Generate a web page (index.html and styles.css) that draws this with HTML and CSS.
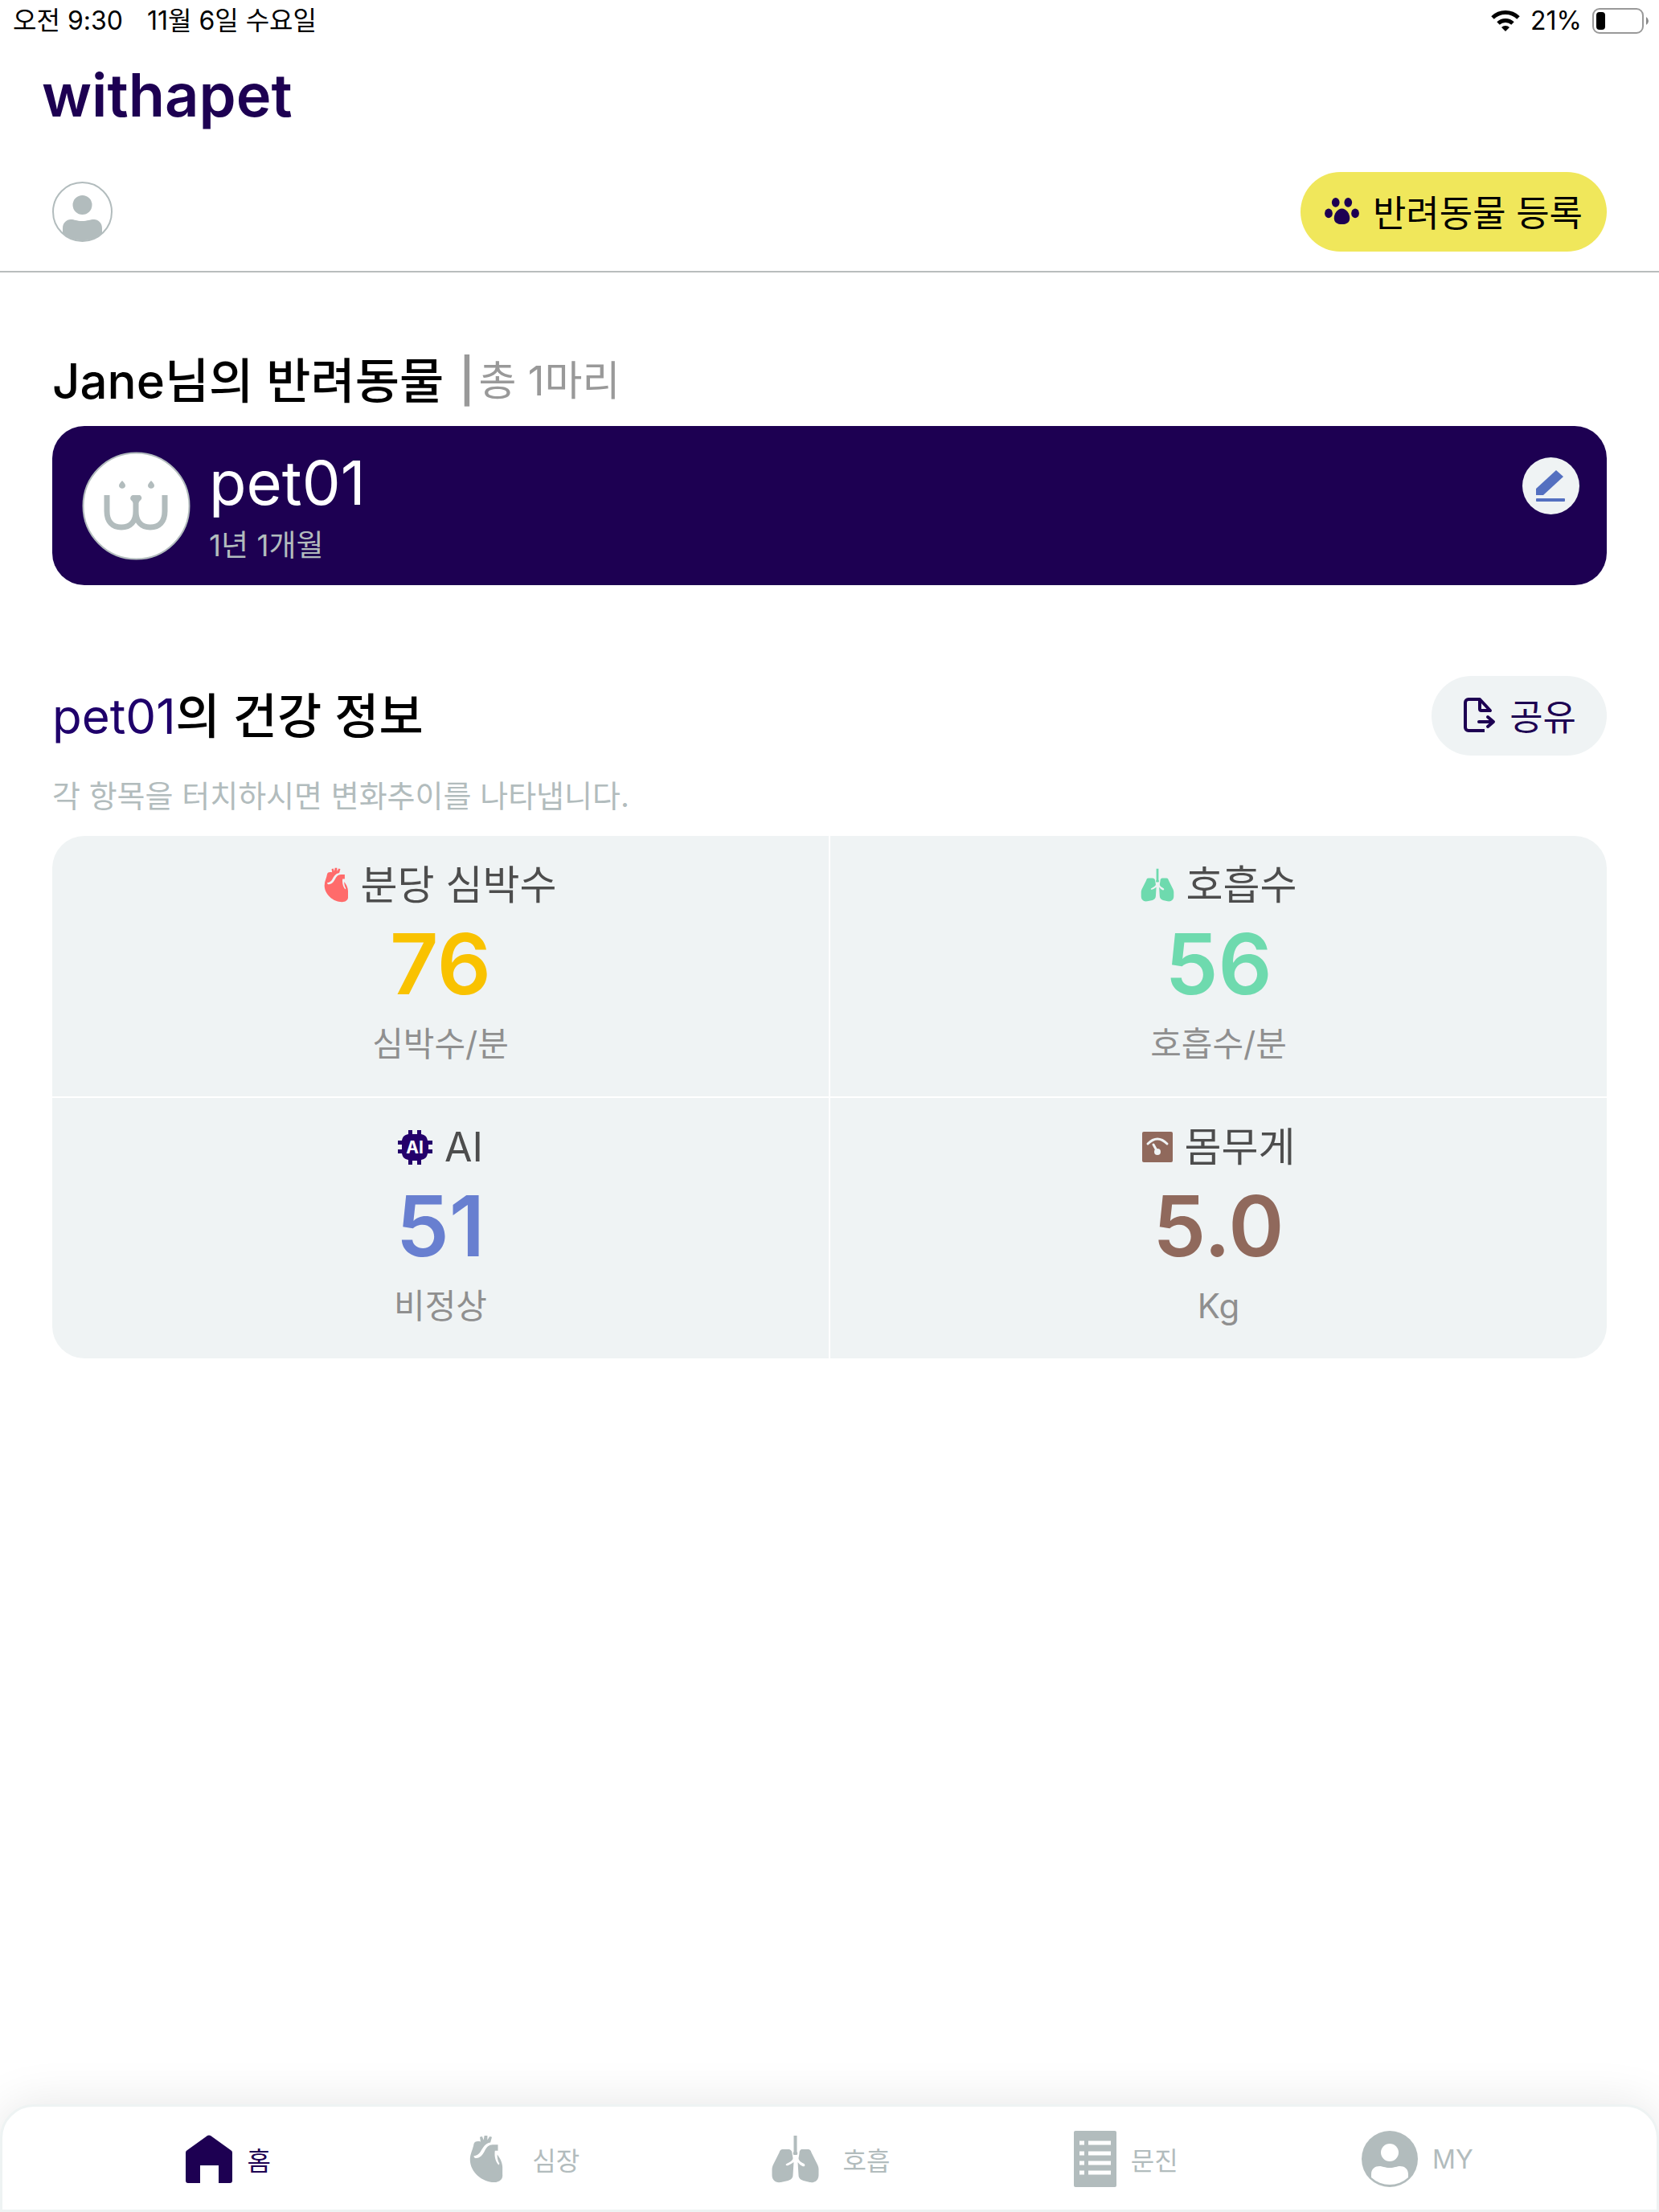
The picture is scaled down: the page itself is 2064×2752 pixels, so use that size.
FILE: index.html
```html
<!DOCTYPE html>
<html lang="ko">
<head>
    <meta charset="UTF-8">
    <meta name="viewport" content="width=device-width, initial-scale=1.0">
    <title>withapet</title>
    <link rel="stylesheet" href="styles.css">
</head>
<body>
    <!-- Shared icon shapes -->
    <svg class="sprite" aria-hidden="true">
        <symbol id="icon-heart" viewBox="0 0 44 64">
            <path d="M14 3l3-1 2 5 1-6h4l0 6 3-5 3 1-2 7c-7 1-10 7-13 12-2 3-4 5-9 6 0 2 1 3 3 3 6-1 8-4 11-9 3-6 6-9 11-9h7v8h-4c-1 8 1 15 5 19l1-2c-2-3-3-7-3-12 4 5 7 11 7 17v9c1 7-4 11-11 11C17 63 1 49 1 33c0-8 4-14 5-21 1-3 4-4 9-3z"/>
        </symbol>
        <symbol id="icon-lungs" viewBox="0 0 60 60">
            <path d="M28 1h4v20c1 1 1 3 0 4h-4c-1-1-1-3 0-4z"/>
            <path d="M14 18h7c3 0 5 2 5 5l1 6c0 3-4 5-8 7-2 1 0 3 2 2 3-1 5-3 7-4l-1 16c0 4-3 6-6 7l-9 2C5 60 1 56 1 50v-7c0-3 1-5 2-7l7-14c1-3 2-4 4-4z"/>
            <path d="M46 18h-7c-3 0-4 2-4 5l-1 6c0 3 3 5 7 7 2 2 0 4-2 3-3-1-4-3-6-5l1 16c0 4 3 6 6 7l8 2c7 1 11-3 11-9v-7c0-3-1-5-2-7l-7-14c-1-3-2-4-4-4z"/>
        </symbol>
    </svg>

    <div class="status-bar">
        <div class="status-left">
            <span>오전 9:30</span>
            <span>11월 6일 수요일</span>
        </div>
        <div class="status-right">
            <svg class="wifi" viewBox="0 0 38 28" aria-hidden="true">
                <path d="M3 10a23 23 0 0 1 32 0M10 17a13 13 0 0 1 18 0" fill="none" stroke="#000" stroke-width="5"/>
                <path d="M19 27l-5-5a7 7 0 0 1 10 0z"/>
            </svg>
            <span>21%</span>
            <svg class="battery" viewBox="0 0 72 34" aria-hidden="true">
                <rect x="2" y="2" width="62" height="30" rx="8" fill="none" stroke="#999" stroke-width="2"/>
                <rect x="6" y="6" width="11" height="22" rx="4"/>
                <path d="M68 12q3 2 3 5t-3 5z" fill="#888"/>
            </svg>
        </div>
    </div>

    <header class="header">
        <h1 class="logo">withapet</h1>
        <div class="header-row">
            <a href="#" class="profile-link" aria-label="내 프로필">
                <svg viewBox="0 0 75 75" aria-hidden="true">
                    <circle cx="37.5" cy="37.5" r="36.5" fill="none" stroke="#b2bcbd" stroke-width="2"/>
                    <circle cx="37.5" cy="29" r="12" fill="#b2bcbd"/>
                    <path d="M13 64V58c0-7 5-11 10-11 5 0 7 2 14 2s10-2 15-2 10 4 10 11v6a37 37 0 0 1-49 0z" fill="#b2bcbd"/>
                </svg>
            </a>
            <button type="button" class="pill register-btn">
                <svg class="paw" viewBox="0 0 44 36" aria-hidden="true">
                    <ellipse cx="14" cy="7" rx="5" ry="6"/>
                    <ellipse cx="30" cy="7" rx="5" ry="6"/>
                    <ellipse cx="5" cy="21" rx="5" ry="6"/>
                    <ellipse cx="39" cy="21" rx="5" ry="6"/>
                    <path d="M22 15c6 0 10 7 10 12 0 6-4 8-10 8s-10-2-10-8c0-5 4-12 10-12z"/>
                </svg>
                반려동물 등록
            </button>
        </div>
    </header>

    <main class="content">
        <section>
            <div class="pets-title">
                <h2>Jane님의 반려동물</h2>
                <span class="bar">|</span>
                <span class="pet-count">총 1마리</span>
            </div>
            <div class="pet-card">
                <svg class="pet-avatar" viewBox="0 0 135 135" aria-hidden="true">
                    <circle cx="67.5" cy="67.5" r="66" fill="#fff" stroke="#b2bcbd" stroke-width="2"/>
                    <path d="M50 36c3 3 4 5 4 6 0 5-8 5-8 0 0-1 1-3 4-6zM86 36c3 3 4 5 4 6 0 5-8 5-8 0 0-1 1-3 4-6z" fill="#b2bcbd"/>
                    <path d="M31 54v20c0 13 7 20 18 20s18-7 18-20V60v14c0 13 7 20 18 20s18-7 18-20V54" fill="none" stroke="#b2bcbd" stroke-width="7"/>
                    <path d="M63 54h9c3 2 3 5 0 7l-2 3h-6l-2-3c-3-2-2-6 1-7z" fill="#b2bcbd"/>
                </svg>
                <div class="pet-info">
                    <div class="pet-name">pet01</div>
                    <div class="pet-age">1년 1개월</div>
                </div>
                <button type="button" class="edit-btn" aria-label="수정">
                    <svg viewBox="0 0 71 71" aria-hidden="true">
                        <path d="M17 47v-8l25-23 9 8-25 23z"/>
                        <rect x="17" y="51" width="36" height="4" rx="1"/>
                    </svg>
                </button>
            </div>
        </section>

        <section class="health">
            <div class="health-title">
                <h2><span class="pet-ref">pet01</span>의 건강 정보</h2>
                <button type="button" class="pill share-btn">
                    <svg class="share-icon" viewBox="0 0 40 44" aria-hidden="true">
                        <path d="M26 41H6a4 4 0 0 1-4-4V6a4 4 0 0 1 4-4h14l13 14H22a2 2 0 0 1-2-2V3" fill="none" stroke="#1d0052" stroke-width="4" stroke-linejoin="round"/>
                        <path d="M19 30h17M30 24l7 6-7 6" fill="none" stroke="#1d0052" stroke-width="4" stroke-linecap="round" stroke-linejoin="round"/>
                    </svg>
                    공유
                </button>
            </div>
            <p class="hint">각 항목을 터치하시면 변화추이를 나타냅니다.</p>

            <div class="health-grid">
                <button type="button" class="health-item heart-rate">
                    <span class="label"><svg class="label-heart"><use href="#icon-heart"/></svg>분당 심박수</span>
                    <span class="value">76</span>
                    <span class="unit">심박수/분</span>
                </button>
                <button type="button" class="health-item breath">
                    <span class="label"><svg class="label-lungs"><use href="#icon-lungs"/></svg>호흡수</span>
                    <span class="value">56</span>
                    <span class="unit">호흡수/분</span>
                </button>
                <button type="button" class="health-item ai">
                    <span class="label">
                        <svg class="label-chip" viewBox="0 0 43 43" aria-hidden="true">
                            <path d="M13 0h5v5h6V0h5v5c5 1 7 3 8 8h6v5h-5v6h5v5h-6c-1 5-3 7-8 8v6h-5v-5h-6v5h-5v-6c-5-1-7-3-8-8H0v-5h5v-6H0v-5h5c1-5 3-7 8-8z"/>
                            <text x="21" y="29" text-anchor="middle" class="chip-text">AI</text>
                        </svg>AI</span>
                    <span class="value">51</span>
                    <span class="unit">비정상</span>
                </button>
                <button type="button" class="health-item weight">
                    <span class="label">
                        <svg class="label-scale" viewBox="0 0 38 38" aria-hidden="true">
                            <rect width="38" height="38" rx="2"/>
                            <path d="M7 15q12-12 24 0M14 16l5 9" fill="none" stroke="#eff3f4" stroke-width="3" stroke-linecap="round"/>
                            <circle cx="19" cy="25" r="4" fill="#eff3f4"/>
                        </svg>몸무게</span>
                    <span class="value">5.0</span>
                    <span class="unit">Kg</span>
                </button>
            </div>
        </section>
    </main>

    <nav class="tab-bar">
        <a href="#" class="tab active">
            <svg class="tab-home" viewBox="0 0 58 60" aria-hidden="true">
                <path d="M27 1q2-1 4 0l25 18q2 1 2 3v35q0 3-3 3H41V38H18v22H3q-3 0-3-3V22q0-2 2-3z"/>
            </svg>
            홈
        </a>
        <a href="#" class="tab">
            <svg class="tab-heart"><use href="#icon-heart"/></svg>
            심장
        </a>
        <a href="#" class="tab">
            <svg class="tab-lungs"><use href="#icon-lungs"/></svg>
            호흡
        </a>
        <a href="#" class="tab">
            <svg class="tab-doc" viewBox="0 0 53 70" aria-hidden="true">
                <rect width="53" height="70" rx="2"/>
                <path d="M7 15h6M7 28h6M7 40h6M7 52h6M18 15h28M18 28h28M18 40h28M18 52h28" stroke="#fff" stroke-width="5"/>
            </svg>
            문진
        </a>
        <a href="#" class="tab">
            <svg class="tab-my" viewBox="0 0 70 70" aria-hidden="true">
                <circle cx="35" cy="35" r="35"/>
                <circle cx="35" cy="27" r="11" fill="#fff"/>
                <path d="M12 58V54c0-7 5-10 10-10 4 0 7 2 13 2s9-2 13-2c5 0 10 3 10 10v4a34 34 0 0 1-46 0z" fill="#fff"/>
            </svg>
            MY
        </a>
    </nav>
</body>
</html>
```

FILE: styles.css
```css
* {
    box-sizing: border-box;
}

body {
    font-family: Inter, "Noto Sans CJK KR", sans-serif;
    background-color: #fff;
    color: #000;
    margin: 0;
    min-height: 100vh;
    display: flex;
    flex-direction: column;
}

h1, h2, p {
    margin: 0;
}

button {
    font-family: inherit;
    border: none;
    padding: 0;
    cursor: pointer;
}

a {
    text-decoration: none;
}

.sprite {
    position: absolute;
    width: 0;
    height: 0;
}

/* Status bar */
.status-bar {
    display: flex;
    justify-content: space-between;
    padding: 0 12px 0 16px;
    font-size: 32px;
    line-height: 52px;
    font-weight: 400;
}

.status-left {
    display: flex;
    gap: 30px;
}

.status-right {
    display: flex;
    align-items: center;
    gap: 12px;
}

.wifi {
    width: 38px;
    height: 28px;
}

.battery {
    width: 72px;
    height: 34px;
}

/* Header */
.header {
    border-bottom: 2px solid #b9bdbd;
}

.logo {
    padding-left: 52px;
    color: #1d0052;
    font-size: 74px;
    line-height: 132px;
    font-weight: 600;
}

.header-row {
    display: flex;
    justify-content: space-between;
    align-items: center;
    padding: 30px 65px 24px;
}

.profile-link svg {
    display: block;
    width: 75px;
    height: 75px;
}

.pill {
    display: flex;
    align-items: center;
    height: 99px;
    padding: 0 30px 2px;
    border-radius: 50px;
    font-size: 45px;
}

.register-btn {
    gap: 17px;
    background-color: #f0e75b;
    color: #000;
}

.paw {
    width: 43px;
    height: 35px;
    fill: #1d0052;
}

/* Content */
.content {
    padding: 99px 65px 0;
}

h2 {
    font-size: 60px;
    line-height: 72px;
    font-weight: 500;
}

.pets-title {
    display: flex;
    align-items: center;
    margin-bottom: 20px;
    color: #999;
    line-height: 72px;
}

.pets-title h2 {
    color: #000;
}

.bar {
    margin: 0 5px 0 19px;
    font-size: 54px;
    font-weight: 600;
}

.pet-count {
    font-size: 51px;
}

.pet-card {
    display: flex;
    align-items: center;
    gap: 23px;
    padding: 27px 34px 27px 37px;
    border-radius: 40px;
    background-color: #1d0052;
}

.pet-avatar {
    width: 135px;
    height: 135px;
}

.pet-name {
    color: #fff;
    font-size: 76px;
    line-height: 86px;
}

.pet-age {
    margin-top: 14px;
    color: #b2bcbd;
    font-size: 37px;
    line-height: 44px;
}

.edit-btn {
    align-self: flex-start;
    width: 71px;
    height: 71px;
    margin: 12px 0 0 auto;
    border-radius: 50%;
    background-color: #eff3f4;
}

.edit-btn svg {
    display: block;
    fill: #5470c0;
}

.health {
    margin-top: 113px;
}

.health-title {
    display: flex;
    justify-content: space-between;
    align-items: center;
}

.pet-ref {
    color: #1f006b;
    font-weight: 400;
}

.share-btn {
    gap: 17px;
    padding: 0 38px 2px 40px;
    background-color: #eff3f4;
    color: #1d0052;
}

.share-icon {
    width: 40px;
    height: 44px;
}

.hint {
    margin: 25px 0;
    color: #b2bcbd;
    font-size: 38px;
    line-height: 50px;
}

.health-grid {
    display: grid;
    grid-template-columns: 1fr 1fr;
    gap: 2px;
    border-radius: 40px;
    overflow: hidden;
}

.health-item {
    display: flex;
    flex-direction: column;
    align-items: center;
    padding: 26px 0 35px;
    background-color: #eff3f4;
}

.label {
    display: flex;
    align-items: center;
    gap: 15px;
    color: #4d4d4d;
    font-size: 50px;
    line-height: 70px;
}

.value {
    margin: 3px 0 10px;
    font-size: 105px;
    line-height: 120px;
    font-weight: 600;
}

.unit {
    color: #8f8f8f;
    font-size: 42px;
    line-height: 60px;
}

.label-heart {
    width: 30px;
    height: 44px;
    fill: #ff6b6b;
}

.label-lungs {
    width: 42px;
    height: 42px;
    fill: #6edaae;
}

.label-chip {
    width: 43px;
    height: 43px;
    fill: #24006b;
}

.chip-text {
    fill: #fff;
    font-size: 21px;
    font-weight: 700;
}

.label-scale {
    width: 38px;
    height: 38px;
    fill: #90695c;
}

.heart-rate .value {
    color: #f9c200;
}

.breath .value {
    color: #6edaae;
}

.ai .value {
    color: #687fd0;
}

.weight .value {
    color: #90695c;
}

/* Bottom tab bar */
.tab-bar {
    display: flex;
    justify-content: space-evenly;
    align-items: center;
    margin-top: auto;
    height: 134px;
    padding-top: 2px;
    border: 3px solid #eef3f3;
    border-radius: 42px 42px 0 0;
    background-color: #fff;
    box-shadow: 0 0 60px rgba(0, 0, 0, 0.1);
}

.tab {
    display: flex;
    align-items: center;
    gap: 18px;
    color: #b2bcbd;
    fill: #b2bcbd;
    font-size: 32px;
}

.tab.active {
    color: #1d0052;
    fill: #1d0052;
}

.tab-home {
    width: 58px;
    height: 60px;
}

.tab-heart {
    width: 79px;
    height: 60px;
}

.tab-lungs {
    width: 81px;
    height: 60px;
}

.tab-doc {
    width: 53px;
    height: 70px;
}

.tab-my {
    width: 70px;
    height: 70px;
}
```
